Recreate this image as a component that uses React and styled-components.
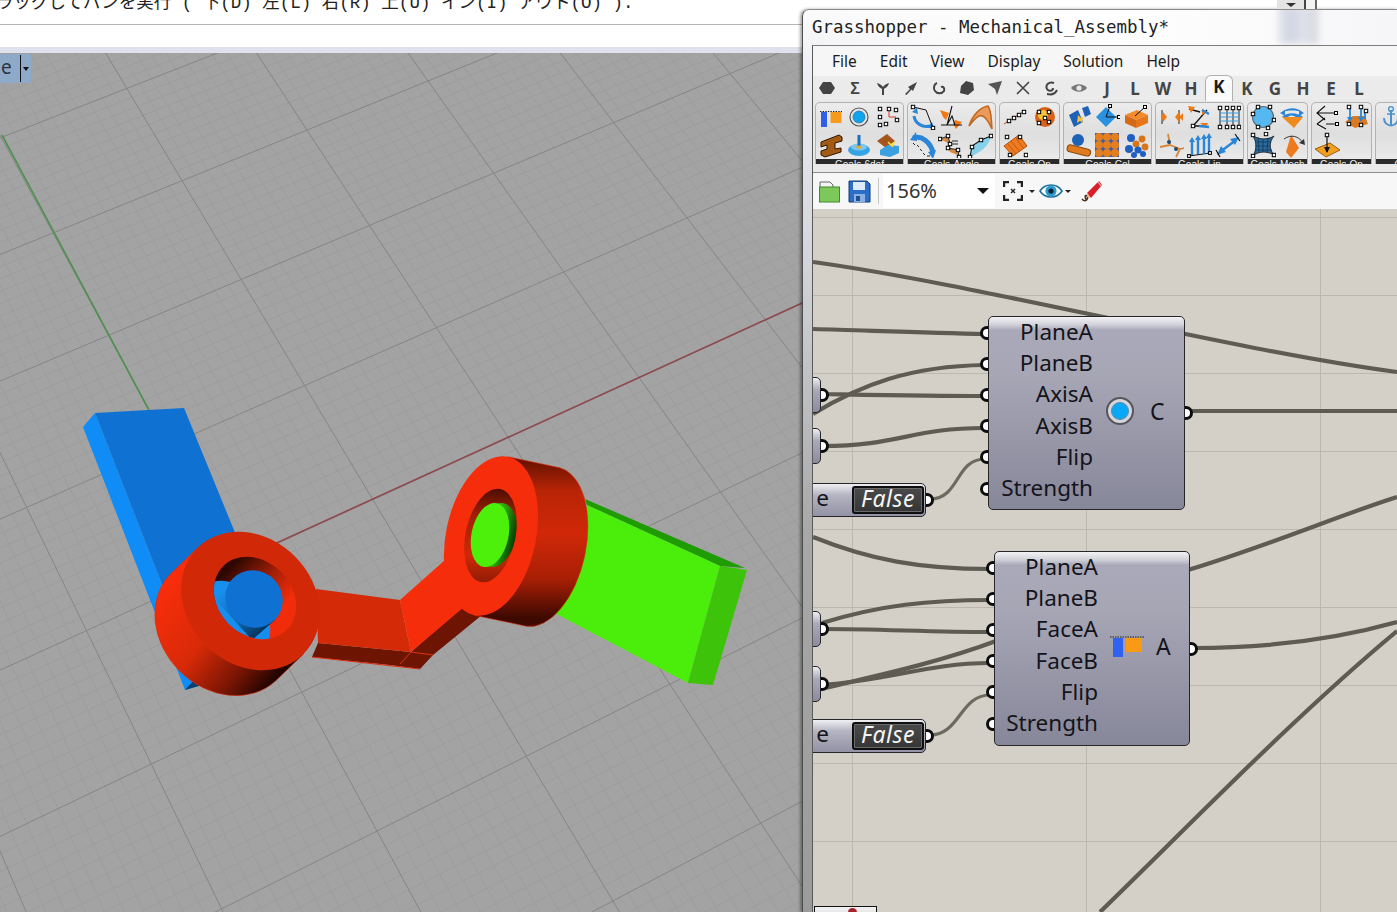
import React from 'react';
import styled, { createGlobalStyle } from 'styled-components';

const GlobalStyle = createGlobalStyle`
	html, body { margin: 0; padding: 0; background: #fff; overflow: hidden; }
	#root { width: 1397px; height: 912px; }
`;

/* ---------- perspective grid of the rhino viewport ---------- */

const quadMap = (p00, p10, p01, p11) => {
	const dx1 = p10[0] - p11[0], dx2 = p01[0] - p11[0], sx = p00[0] - p10[0] + p11[0] - p01[0];
	const dy1 = p10[1] - p11[1], dy2 = p01[1] - p11[1], sy = p00[1] - p10[1] + p11[1] - p01[1];
	const den = dx1 * dy2 - dx2 * dy1;
	const g = (sx * dy2 - dx2 * sy) / den;
	const h = (dx1 * sy - sx * dy1) / den;
	const a = p10[0] - p00[0] + g * p10[0], b = p01[0] - p00[0] + h * p01[0];
	const d = p10[1] - p00[1] + g * p10[1], e = p01[1] - p00[1] + h * p01[1];
	return (u, v) => {
		const w = g * u + h * v + 1;
		return [(a * u + b * v + p00[0]) / w, (d * u + e * v + p00[1]) / w];
	};
};

const project = quadMap([53, 233], [428, 81], [377, 831], [808, 615]);
const at = (col, row) => project(col / 3, (row - 1) / 5);

const gridLines = () => {
	const lines = [];
	for (let i = -40; i <= 90; i++) {
		const a = at(i / 10, -1.6), b = at(i / 10, 8.6);
		lines.push({ key: 'c' + i, a, b, major: i % 10 === 0 });
	}
	for (let i = -16; i <= 86; i++) {
		const a = at(-4, i / 10), b = at(9, i / 10);
		lines.push({ key: 'r' + i, a, b, major: i % 10 === 0 });
	}
	return lines;
};

const RhinoScene = () => (
	<SceneSvg viewBox="0 53 802 859">
		<defs>
			<linearGradient id="ring1Body" gradientUnits="userSpaceOnUse" x1="172" y1="573" x2="303" y2="680">
				<stop offset="0" stopColor="#f92d0b" />
				<stop offset="0.4" stopColor="#d82a08" />
				<stop offset="0.68" stopColor="#781503" />
				<stop offset="0.88" stopColor="#1c0300" />
				<stop offset="1" stopColor="#2e0600" />
			</linearGradient>
			<linearGradient id="ring1Wall" gradientUnits="userSpaceOnUse" x1="232" y1="565" x2="292" y2="620">
				<stop offset="0" stopColor="#2e0700" />
				<stop offset="0.45" stopColor="#a62006" />
				<stop offset="0.8" stopColor="#f02c0a" />
			</linearGradient>
			<linearGradient id="pin1Body" gradientUnits="userSpaceOnUse" x1="222" y1="590" x2="262" y2="640">
				<stop offset="0" stopColor="#1a90ee" />
				<stop offset="0.55" stopColor="#0f68b4" />
				<stop offset="1" stopColor="#052542" />
			</linearGradient>
			<linearGradient id="ring2Body" x1="0" y1="0" x2="0" y2="1">
				<stop offset="0" stopColor="#5e1000" />
				<stop offset="0.2" stopColor="#b82406" />
				<stop offset="0.45" stopColor="#d02808" />
				<stop offset="0.72" stopColor="#a81f05" />
				<stop offset="0.95" stopColor="#3d0900" />
			</linearGradient>
			<linearGradient id="ring2Wall" x1="0" y1="0" x2="0" y2="1">
				<stop offset="0" stopColor="#400b00" />
				<stop offset="0.3" stopColor="#a02006" />
				<stop offset="0.7" stopColor="#cf2908" />
				<stop offset="1" stopColor="#8a1a04" />
			</linearGradient>
			<linearGradient id="pin2Body" x1="0" y1="0" x2="0" y2="1">
				<stop offset="0" stopColor="#47dc0a" />
				<stop offset="0.6" stopColor="#2c9e06" />
				<stop offset="1" stopColor="#063c00" />
			</linearGradient>
			<clipPath id="hole1">
				<ellipse cx="255" cy="598" rx="45" ry="37" transform="rotate(45 255 598)" />
			</clipPath>
			<clipPath id="hole2">
				<ellipse cx="490.5" cy="535.5" rx="47.5" ry="25" transform="rotate(-78 490.5 535.5)" />
			</clipPath>
		</defs>

		<rect x="0" y="53" width="802" height="859" fill="#a3a3a3" />
		{gridLines().filter((l) => !l.major).map((l) => (
			<line key={l.key} x1={l.a[0]} y1={l.a[1]} x2={l.b[0]} y2={l.b[1]} stroke="#9d9d9d" strokeWidth="1" />
		))}
		{gridLines().filter((l) => l.major).map((l) => (
			<line key={l.key} x1={l.a[0]} y1={l.a[1]} x2={l.b[0]} y2={l.b[1]} stroke="#858585" strokeWidth="1" />
		))}
		<line x1="2" y1="135" x2="150" y2="412" stroke="#4f9150" strokeWidth="1.6" />
		<line x1="270" y1="546" x2="802" y2="303" stroke="#8f4a4e" strokeWidth="1.6" />

		{/* blue bar */}
		<polygon points="83,427 95,413 163,587 230,640 202,685 185,690" fill="#0f8cf5" />
		<polygon points="95,413 184,408 236,535 200,640 163,587" fill="#0f72d2" />
		<polygon points="185,690 196,678 215,680 202,685" fill="#0a3f70" />

		{/* green bar */}
		<polygon points="585,499 745,568 720,566 587,505" fill="#1f9c02" />
		<polygon points="587,505 720,566 688,683 545,608" fill="#4bee0a" />
		<polygon points="720,566 747,570 713,685 688,683" fill="#3dc40a" />

		{/* link arm */}
		<polygon points="318,643 411,652 462,607 482,615 433,655 420,669 390,665 312,657" fill="#6e1403" />
		<polygon points="316,589 400,600 411,652 318,643" fill="#d42a08" />
		<polygon points="400,600 445,560 464,607 411,652" fill="#f52d0b" />
		<path d="M400,664 L411,652 L433,655" fill="none" stroke="#f0400f" strokeWidth="0.8" />
		<path d="M312,657 L420,669" fill="none" stroke="#e02a08" strokeWidth="1" />

		{/* ring at the blue pin */}
		<path d="M197.5,548 L169.5,575 A75 63 45 0 0 275.5,681 L303.5,654 Z" fill="url(#ring1Body)" stroke="#dc2a08" strokeWidth="0.6" />
		<ellipse cx="250.5" cy="601" rx="75" ry="63" transform="rotate(45 250.5 601)" fill="#d12808" />
		<g clipPath="url(#hole1)">
			<rect x="205" y="550" width="100" height="100" fill="url(#ring1Wall)" />
			<ellipse cx="229" cy="622" rx="45" ry="37" transform="rotate(45 229 622)" fill="#168ef0" />
			<path d="M234,578 L214,598 L252,640 L275,620 Z" fill="url(#pin1Body)" />
			<ellipse cx="254" cy="599" rx="29.5" ry="28" transform="rotate(45 254 599)" fill="#0f72d2" />
		</g>

		{/* ring at the green pin */}
		<path d="M507.8,456.8 L559.8,467.8 A81 44 -78 0 1 526.2,626.2 L474.2,615.2 Z" fill="url(#ring2Body)" stroke="#e22a08" strokeWidth="0.6" />
		<ellipse cx="491" cy="536" rx="81" ry="45" transform="rotate(-78 491 536)" fill="#f52d0b" />
		<g clipPath="url(#hole2)">
			<rect x="455" y="485" width="70" height="100" fill="url(#ring2Wall)" />
			<ellipse cx="497" cy="535" rx="32.5" ry="19" transform="rotate(-78 497 535)" fill="url(#pin2Body)" />
			<ellipse cx="490" cy="535" rx="32.5" ry="18.5" transform="rotate(-78 490 535)" fill="#4cf00a" />
		</g>
	</SceneSvg>
);

/* ---------- grasshopper ribbon icons ---------- */

const H = ({ x, y, size = 3.4 }) => (
	<rect x={x - size / 2} y={y - size / 2} width={size} height={size} fill="#fff" stroke="#000" strokeWidth="1" />
);
const Dot = ({ x, y, r = 2.6, c = '#e07a14' }) => <circle cx={x} cy={y} r={r} fill={c} />;
const BLUE = '#2a86d8';
const ORANGE = '#ee7a16';

const alignIcon = (
	<>
		<path d="M2 7.5H24" stroke="#222" strokeWidth="1" strokeDasharray="1.4 1.2" />
		<rect x="3" y="8" width="6" height="15" fill="#2f5fe8" />
		<rect x="12.5" y="8" width="11" height="11" fill="#f59a1c" />
	</>
);

const ICONS = [
	[
		alignIcon,
		<>
			<circle cx="13" cy="13" r="9" fill="#e4e4e8" stroke="#555" strokeWidth="1.2" />
			<circle cx="13" cy="13" r="6" fill="#0ea5ee" stroke="#185a86" strokeWidth="0.6" />
		</>,
		<>
			<path d="M14 6V13H21" stroke="#d8382a" strokeWidth="1" fill="none" />
			<H x={5} y={5} /><H x={14} y={5} /><H x={21} y={6} /><H x={5} y={13} /><H x={22} y={16} /><H x={5} y={21} /><H x={11} y={20} />
		</>,
		<>
			<polygon points="3,10 21,3 24,5 24,9 17,11 17,17 23,16 23,20 7,25 3,23 3,19 9,17 9,13 3,15" fill="#a25a14" stroke="#2e1600" strokeWidth="1" />
		</>,
		<>
			<ellipse cx="13" cy="18" rx="11" ry="6" fill="#36a4e4" />
			<ellipse cx="13" cy="15" rx="8" ry="3.5" fill="#7cc8f0" />
			<path d="M13 3V15" stroke="#1b6ec0" strokeWidth="3" />
			<ellipse cx="13" cy="15" rx="3" ry="1.6" fill="#e8a83a" />
		</>,
		<>
			<polygon points="2,9 12,2 20,9 11,16" fill="#a5541c" />
			<polygon points="5,18 13,13 24,14 24,21 15,25 5,23" fill="#3aa0e0" />
			<path d="M13 10L16 13L19 11L17 15" stroke="#f8e04a" strokeWidth="1.6" fill="none" />
		</>,
	],
	[
		<>
			<path d="M4 12C5 19 12 24 20 22" stroke={BLUE} strokeWidth="3" fill="none" />
			<path d="M2 8L7 4L8 10ZM22 18L24 24L17 24Z" fill={BLUE} />
			<path d="M3 3L16 6L23 24" stroke="#111" strokeWidth="1" fill="none" />
			<H x={3} y={3} /><H x={23} y={24} />
		</>,
		<>
			<path d="M2 6L11 9L8 16L5 13ZM17 16L24 18L18 25L15 20Z" fill={ORANGE} />
			<path d="M14 2L9 21M3 21H24M14 12L9 21L17 21Z" stroke="#111" strokeWidth="1.1" fill="none" />
		</>,
		<>
			<path d="M2 22C6 10 14 3 21 2C25 8 24 16 25 25C21 16 17 10 12 12C8 14 5 18 2 22Z" fill="#ec9a5c" stroke="#c26a22" strokeWidth="1.6" />
		</>,
		<>
			<path d="M3 6C12 3 20 10 23 20" stroke={BLUE} strokeWidth="5" fill="none" />
			<path d="M0 8L6 0L7 9ZM18 20L26 18L23 27Z" fill={BLUE} />
			<path d="M3 11L5 13M7 13L9 15M10 17L12 19M13 21L15 23M17 24H20" stroke="#111" strokeWidth="0.9" />
		</>,
		<>
			<path d="M2 7L10 5L12 12L6 9ZM10 16L18 18L22 24L12 20Z" fill="#d88a40" />
			<path d="M2 7L10 4L12 12M10 16L20 18L21 25M14 9H20M14 12H20" stroke="#111" strokeWidth="0.9" fill="none" />
			<H x={2} y={7} /><H x={10} y={4} /><H x={12} y={12} /><H x={10} y={16} /><H x={20} y={18} /><H x={21} y={25} />
		</>,
		<>
			<path d="M3 25C4 14 10 9 24 4C22 14 14 20 3 25Z" fill="#86d0ea" />
			<path d="M3 25L5 14L14 8L24 4" stroke="#111" strokeWidth="1.1" fill="none" />
			<H x={3} y={25} /><H x={5} y={15} /><H x={14} y={8} /><H x={24} y={4} />
		</>,
	],
	[
		<>
			<path d="M2 20L24 6" stroke="#b84a1a" strokeWidth="1" />
			<H x={7} y={17} /><H x={12} y={14} /><H x={17} y={11} /><H x={22} y={8} />
		</>,
		<>
			<circle cx="14" cy="13" r="10" fill="#d8621a" />
			<circle cx="12" cy="11" r="5" fill="#f4c43a" />
			<H x={8} y={8} /><H x={18} y={8} /><H x={8} y={19} /><H x={18} y={18} /><H x={14} y={14} />
		</>,
		<>
			<polygon points="2,14 17,3 25,14 11,24" fill="#ef7a20" stroke="#b2520e" strokeWidth="1" />
			<path d="M9 9L18 20M14 6L22 17M6 12L14 22" stroke="#c25a10" strokeWidth="1" />
			<H x={5} y={5} /><H x={18} y={5} /><H x={8} y={23} /><H x={24} y={23} />
		</>,
		null,
		null,
		null,
	],
	[
		<>
			<polygon points="3,11 12,6 17,18 8,23" fill="#1e62b8" />
			<polygon points="16,4 22,2 25,10 19,13" fill="#1e62b8" />
			<path d="M12 11L15 14L18 13L16 16L17 19L14 17L11 19" fill="#f8c03a" />
		</>,
		<>
			<polygon points="12,3 22,13 12,23 2,13" fill="#2892e0" />
			<path d="M12 13H25M16 2L12 13" stroke="#111" strokeWidth="1" />
			<H x={25} y={13} size={3} /><H x={16} y={2} size={3} />
		</>,
		<>
			<polygon points="2,11 14,6 25,11 13,16" fill="#f28a2a" />
			<polygon points="2,11 13,16 13,24 2,19" fill="#d66a14" />
			<polygon points="25,11 13,16 13,24 25,19" fill="#e5761a" />
			<path d="M12 12L22 3" stroke="#111" strokeWidth="1" />
			<H x={22} y={3} size={3} />
		</>,
		<>
			<circle cx="12" cy="8" r="6" fill="#1e62b8" />
			<rect x="1" y="15" width="24" height="7" rx="3.5" transform="rotate(14 13 18)" fill="#df7a1e" stroke="#8a4a10" strokeWidth="1" />
		</>,
		<>
			<rect x="1" y="1" width="24" height="24" fill="#3a5ea8" />
			{[5, 13, 21].map((y) => [5, 13, 21].map((x) => <Dot key={x + '-' + y} x={x} y={y} r={4} c="#e67e1c" />))}
		</>,
		<>
			<Dot x={8} y={6} r={4} c="#1f5fc4" /><Dot x={19} y={7} r={3.4} c="#d8741a" /><Dot x={13} y={12} r={3.4} c="#d8741a" />
			<Dot x={6} y={17} r={4} c="#1f5fc4" /><Dot x={15} y={18} r={3.6} c="#1f5fc4" /><Dot x={22} y={15} r={3.4} c="#d8741a" /><Dot x={11} y={23} r={3} c="#1f5fc4" /><Dot x={20} y={22} r={3} c="#1f5fc4" />
		</>,
	],
	[
		<>
			<path d="M4 6V20M21 6V20" stroke="#222" strokeWidth="1" />
			<polygon points="4,13 0,9 0,17" fill={ORANGE} transform="translate(3 0)" />
			<polygon points="9,13 5,8 5,18" fill={ORANGE} />
			<polygon points="17,13 21,8 21,18" fill={ORANGE} />
			<polygon points="21,13 25,9 25,17" fill={ORANGE} />
		</>,
		<>
			<path d="M3 5L14 8M21 6L7 22L20 22" stroke="#111" strokeWidth="1.3" fill="none" />
			<path d="M2 2L9 3L5 9ZM16 5L22 8L16 11ZM14 19L22 19L20 24Z" fill={ORANGE} />
			<path d="M16 6L23 10M13 22L23 23" stroke={BLUE} strokeWidth="2.4" />
			<H x={7} y={22} />
		</>,
		<>
			<path d="M5 3V24M12 3V24M18 3V24M24 3V24" stroke="#222" strokeWidth="1" />
			<path d="M5 9H24M5 13H24M5 17H24" stroke="#3a9ee0" strokeWidth="1.2" />
			<H x={5} y={4} /><H x={12} y={4} /><H x={18} y={4} /><H x={24} y={4} /><H x={5} y={23} /><H x={12} y={23} /><H x={18} y={23} /><H x={24} y={23} />
		</>,
		<>
			<path d="M10 2L12 13L2 15M12 13L22 17L18 25M22 17L26 16" stroke="#d8863a" strokeWidth="1.8" fill="none" />
			<circle cx="11" cy="10" r="2" fill="#1d4d76" /><circle cx="18" cy="17" r="2" fill="#1d4d76" />
		</>,
		<>
			<path d="M3 24L24 21" stroke="#111" strokeWidth="1.2" />
			<path d="M6 23V9M12 22V7M18 22V6M23 21V5" stroke="#2a86d8" strokeWidth="2.4" />
			<path d="M3 10L6 5L9 10ZM9 8L12 3L15 8ZM15 7L18 2L21 7ZM20 6L23 1L26 6Z" fill="#2a86d8" />
			<H x={3} y={24} size={2.8} /><H x={24} y={21} size={2.8} />
		</>,
		<>
			<path d="M5 20L21 8" stroke="#2a86d8" strokeWidth="2.4" />
			<path d="M2 23L6 14L11 20ZM24 5L15 7L20 13Z" fill="#2a86d8" />
			<path d="M1 18L5 25M20 2L25 9" stroke="#111" strokeWidth="1.2" />
		</>,
	],
	[
		<>
			<circle cx="13" cy="13" r="10.5" fill="#56b8f0" stroke="#5d6c74" strokeWidth="1.2" />
			<H x={8} y={3} /><H x={20} y={3} /><H x={3} y={10} /><H x={24} y={16} /><H x={8} y={23} /><H x={18} y={24} />
		</>,
		<>
			<polygon points="3,13 24,13 15,24" fill="#ee8a1e" />
			<path d="M3 8C9 3 18 3 23 8C18 6 8 6 3 8ZM3 13C8 8 18 8 24 13L17 13C14 11 11 11 9 13Z" fill="#2a86d8" />
			<path d="M1 9L6 6L6 12ZM25 9L20 6L20 12Z" fill="#2a86d8" />
		</>,
		<>
			<path d="M2 3C8 8 18 8 24 4C19 10 19 17 24 23C18 19 8 19 3 24C7 17 7 9 2 3Z" fill="#2d6a9c" stroke="#111" strokeWidth="0.8" />
			<path d="M8 5L9 21M13 7V20M18 6L17 21M5 10H21M5 14H20M5 18H22" stroke="#103a5a" strokeWidth="0.8" />
			<H x={3} y={3} /><H x={16} y={2} /><H x={3} y={24} /><H x={24} y={23} />
		</>,
		<>
			<polygon points="12,3 7,20 12,26 20,16" fill="#ee7a1e" />
			<path d="M5 7C12 2 20 4 24 11" stroke="#333" strokeWidth="1" fill="none" />
			<path d="M25 7L26 13L20 11Z" fill="#333" />
		</>,
	],
	[
		<>
			<path d="M11 2L3 9L11 16M3 9H21M3 20L11 14M3 20L12 25M12 20H23" stroke="#111" strokeWidth="1.1" fill="none" />
			<H x={22} y={9} size={3} /><H x={23} y={20} size={3} />
		</>,
		<>
			<polygon points="2,18 10,12 22,12 25,20 12,24" fill="#dc7a22" />
			<path d="M7 3V15M18 3V15M22 6V15" stroke="#2a86d8" strokeWidth="1.8" />
			<path d="M4 13L7 18L10 13ZM15 13L18 18L21 13Z" fill="#2a86d8" />
			<H x={6} y={3} /><H x={18} y={3} /><H x={23} y={7} /><H x={6} y={20} /><H x={18} y={21} />
		</>,
		<>
			<polygon points="1,17 16,11 26,18 12,25" fill="#f0a020" stroke="#a05c0e" strokeWidth="1" />
			<path d="M13 2V20" stroke="#111" strokeWidth="1.2" />
			<path d="M10 15L13 21L16 15Z" fill="#111" />
			<H x={13} y={3} />
		</>,
		null,
	],
	[
		<>
			<path d="M13 6V21M6 14C6 24 20 24 20 14" stroke="#4a92d2" strokeWidth="2" fill="none" />
			<circle cx="13" cy="5" r="2.4" fill="none" stroke="#4a92d2" strokeWidth="1.4" />
			<path d="M9 10H17" stroke="#4a92d2" strokeWidth="1.6" />
		</>,
		<>
			<path d="M11 12V24M5 18C5 26 17 26 17 18" stroke="#18a0c8" strokeWidth="2" fill="none" />
			<path d="M11 10V2M16 10L24 3" stroke="#111" strokeWidth="1.1" />
		</>,
	],
];

const PANELS = [
	{ title: 'Goals-6dof', cols: 3, icons: ICONS[0] },
	{ title: 'Goals-Angle', cols: 3, icons: ICONS[1] },
	{ title: 'Goals-On', cols: 2, icons: [ICONS[2][0], ICONS[2][1], ICONS[2][2], null] },
	{ title: 'Goals-Col', cols: 3, icons: ICONS[3] },
	{ title: 'Goals-Lin', cols: 3, icons: ICONS[4] },
	{ title: 'Goals-Mesh', cols: 2, icons: ICONS[5] },
	{ title: 'Goals-On', cols: 2, icons: ICONS[6] },
	{ title: 'Grab', cols: 2, icons: ICONS[7] },
];

/* small glyphs of the category tabs, the rest of them are letters */
const TAB_ICONS = [
	<path d="M4 2H12L16 8L12 14H4L0 8Z" fill="#444" />,
	<text x="8" y="14" textAnchor="middle" fontFamily="Liberation Sans, sans-serif" fontWeight="700" fontSize="16" fill="#444">Σ</text>,
	<path d="M2 3C3 7 6 8 7 9V15H9V9C10 8 13 7 14 3C11 4 9 5 8 7C7 5 5 4 2 3Z" fill="#444" />,
	<path d="M2 14L7 9L5 7L14 2L10 11L8.5 9.5L3.5 15Z" fill="#444" />,
	<path d="M6 3C3 4 2 8 4 11C6 14 11 14 13 11C14 8 12 6 10 7" stroke="#444" strokeWidth="2" fill="none" />,
	<path d="M7 1L14 3L15 10L9 15L1 13L2 6Z" fill="#444" />,
	<path d="M1 4L15 1L10 15L8 9Z" fill="#555" />,
	<path d="M2 2L14 14M14 2L2 14" stroke="#444" strokeWidth="1.6" />,
	<path d="M11 3C6 1 2 5 4 9C6 12 10 11 10 8M4 14C8 15 12 14 14 10" stroke="#444" strokeWidth="2" fill="none" />,
	<>
		<path d="M0 8C4 3 12 3 16 8C12 13 4 13 0 8Z" fill="#777" />
		<circle cx="8" cy="8" r="2.6" fill="#e8e8e8" />
	</>,
];
const TAB_LETTERS = ['J', 'L', 'W', 'H', 'K', 'K', 'G', 'H', 'E', 'L'];
const MENU = ['File', 'Edit', 'View', 'Display', 'Solution', 'Help'];

const WIRES = [
	'M813,262 C980,285 1230,350 1397,372',
	'M813,329 C880,331 930,333 985,334',
	'M813,414 C860,385 910,366 985,365',
	'M822,394 C880,395 930,396 985,396',
	'M822,446 C900,446 910,428 985,428',
	'M1188,411 L1397,411',
	'M813,537 C870,560 920,569 990,569',
	'M822,623 C880,605 930,600 990,600',
	'M822,629 C880,629 930,632 990,632',
	'M822,685 C890,680 930,663 990,663',
	'M825,688 C880,675 940,662 996,641',
	'M1193,648 C1270,648 1340,638 1397,622',
	'M1188,570 C1270,545 1340,515 1397,497',
	'M1100,912 C1180,835 1290,720 1397,631',
];
const THIN_WIRES = ['M930,499 C960,499 955,459 985,459', 'M930,735 C960,735 960,695 990,695'];

const App = () => (
	<Page>
		<GlobalStyle />
		<RhinoColumn>
			<CommandHistory>
				<CommandText>ラッグしてパンを実行 ( 下(D) 左(L) 右(R) 上(U) イン(I) アウト(O) ).</CommandText>
			</CommandHistory>
			<CommandInput />
			<ViewportBand />
			<Viewport>
				<RhinoScene />
				<ViewTab>
					<ViewTabName>e</ViewTabName>
					<ViewTabArrow />
				</ViewTab>
			</Viewport>
		</RhinoColumn>

		<DesktopColumn>
			<BehindScroll>
				<BehindArrow />
			</BehindScroll>
			<Window>
				<TitleBar>
					<TitleText>Grasshopper - Mechanical_Assembly*</TitleText>
					<GlassSmear />
				</TitleBar>
				<Client>
					<MenuBar>
						{MENU.map((m) => <MenuItem key={m}>{m}</MenuItem>)}
					</MenuBar>
					<TabRow>
						{TAB_ICONS.map((icon, i) => (
							<Tab key={i}>
								<svg width="16" height="16" viewBox="0 0 16 16">{icon}</svg>
							</Tab>
						))}
						{TAB_LETTERS.map((l, i) => <Tab key={i} $active={i === 4}>{l}</Tab>)}
					</TabRow>
					<Ribbon>
						{PANELS.map((p, i) => (
							<Panel key={i} $cols={p.cols}>
								<PanelIcons $cols={p.cols}>
									{p.icons.map((icon, j) => (
										<PanelIcon key={j}>
											{icon && <svg width="26" height="26" viewBox="0 0 26 26">{icon}</svg>}
										</PanelIcon>
									))}
								</PanelIcons>
								<PanelTitle>{p.title}</PanelTitle>
							</Panel>
						))}
					</Ribbon>
					<Toolbar>
						<ToolIcon $w={26}>
							<svg width="24" height="26" viewBox="0 0 24 26">
								<path d="M2 4H12L15 7V10H2Z" fill="#f4f4f4" stroke="#666" />
								<rect x="1.5" y="9" width="20" height="15" fill="#7cc85a" stroke="#3c8a30" />
							</svg>
						</ToolIcon>
						<ToolIcon $w={32}>
							<svg width="24" height="24" viewBox="0 0 24 24">
								<path d="M2 2H20L23 5V23H2Z" fill="#2a6ec8" stroke="#123c78" />
								<rect x="6" y="3" width="12" height="8" fill="#dfeafa" />
								<rect x="7" y="15" width="11" height="8" fill="#8ab0e0" />
								<rect x="9" y="17" width="4" height="5" fill="#1d4f98" />
							</svg>
						</ToolIcon>
						<ToolSeparator />
						<ZoomCombo>
							<span>156%</span>
							<ComboArrow />
						</ZoomCombo>
						<ToolIcon $w={30}>
							<svg width="20" height="20" viewBox="0 0 20 20">
								<path d="M1 6V1H6M14 1H19V6M19 14V19H14M6 19H1V14" stroke="#222" strokeWidth="2.4" fill="none" />
								<path d="M8 8L12 12M12 8L8 12" stroke="#222" strokeWidth="1.4" />
							</svg>
						</ToolIcon>
						<SmallArrow />
						<ToolIcon $w={26}>
							<svg width="24" height="18" viewBox="0 0 24 18">
								<path d="M1 9C6 1 18 1 23 9C18 17 6 17 1 9Z" fill="#fff" stroke="#1c6f9c" strokeWidth="1.6" />
								<circle cx="12" cy="9" r="5.6" fill="#2a9ad0" />
								<circle cx="12" cy="9" r="2.6" fill="#10242e" />
							</svg>
						</ToolIcon>
						<SmallArrow />
						<ToolIcon $w={34}>
							<svg width="24" height="24" viewBox="0 0 24 24">
								<path d="M3 20C6 24 10 20 8 17C6 15 5 19 8 21" stroke="#4a2a14" strokeWidth="1.4" fill="none" />
								<polygon points="8,14 20,2 23,6 12,19" fill="#d8202a" />
								<polygon points="8,14 12,19 8,18" fill="#f0b078" />
								<path d="M19 3L22 7" stroke="#ffb0b0" strokeWidth="1.2" />
							</svg>
						</ToolIcon>
					</Toolbar>
					<Canvas>
						<WireLayer viewBox="813 209 584 703">
							{WIRES.map((d) => <path key={d} d={d} fill="none" stroke="#5e5b53" strokeWidth="4.2" />)}
							{THIN_WIRES.map((d) => <path key={d} d={d} fill="none" stroke="#6c695f" strokeWidth="3.2" />)}
						</WireLayer>

						<Stub $y={377} />
						<Stub $y={428} />
						<Toggle $y={483} />
						<ComponentNode $x={988} $y={316} $w={197} $h={194}>
							<InputColumn $w={104}>
								{['PlaneA', 'PlaneB', 'AxisA', 'AxisB', 'Flip', 'Strength'].map((n) => (
									<InputRow key={n}><Port />{n}</InputRow>
								))}
							</InputColumn>
							<NodeOutput $gap={15}>
								<svg width="30" height="30" viewBox="0 0 30 30">
									<circle cx="15" cy="15" r="13" fill="#d4d4da" stroke="#55555d" strokeWidth="2" />
									<circle cx="15" cy="15" r="8.5" fill="#08a8f6" stroke="#5a8ca8" strokeWidth="1" />
								</svg>
								<OutputName>C</OutputName>
							</NodeOutput>
							<Port $out />
						</ComponentNode>

						<Stub $y={611} />
						<Stub $y={666} />
						<Toggle $y={719} />
						<ComponentNode $x={994} $y={551} $w={196} $h={195}>
							<InputColumn $w={103}>
								{['PlaneA', 'PlaneB', 'FaceA', 'FaceB', 'Flip', 'Strength'].map((n) => (
									<InputRow key={n}><Port />{n}</InputRow>
								))}
							</InputColumn>
							<NodeOutput $gap={10}>
								<svg width="36" height="24" viewBox="0 0 36 24">
									<path d="M0 2H35" stroke="#222" strokeWidth="1" strokeDasharray="1.5 1" />
									<rect x="3" y="3" width="10" height="19" fill="#2f62f0" />
									<rect x="16" y="3" width="16" height="14" fill="#f89a14" />
								</svg>
								<OutputName>A</OutputName>
							</NodeOutput>
							<Port $out />
						</ComponentNode>

						<BottomStub>
							<BottomStubMark />
						</BottomStub>
					</Canvas>
				</Client>
			</Window>
		</DesktopColumn>
	</Page>
);

const Toggle = ({ $y }) => (
	<ToggleBody $y={$y}>
		<ToggleLabel>e</ToggleLabel>
		<ToggleChip>False</ToggleChip>
		<Port $out />
	</ToggleBody>
);

const Page = styled.div`
	display: flex;
	width: 1397px;
	height: 912px;
	overflow: hidden;
	background: #fff;
`;

const RhinoColumn = styled.div`
	display: flex;
	flex-direction: column;
	width: 802px;
	flex: none;
`;

const CommandHistory = styled.div`
	height: 24px;
	overflow: hidden;
	border-bottom: 1px solid #b4b4b4;
	box-sizing: content-box;
`;

const CommandText = styled.div`
	margin: -7px 0 0 -4px;
	font: 17.5px/20px 'Liberation Mono', 'Noto Sans CJK JP', monospace;
	color: #222;
	white-space: nowrap;
`;

const CommandInput = styled.div`
	height: 22px;
	background: #fff;
`;

const ViewportBand = styled.div`
	height: 6px;
	background: #dfe2ec;
`;

const Viewport = styled.div`
	position: relative;
	flex: 1;
	overflow: hidden;
`;

const SceneSvg = styled.svg`
	display: block;
	width: 802px;
	height: 859px;
`;

const ViewTab = styled.div`
	position: absolute;
	left: 0;
	top: 1px;
	display: flex;
	align-items: center;
	width: 31px;
	height: 29px;
	background: #8fa9c9;
`;

const ViewTabName = styled.div`
	width: 21px;
	height: 27px;
	box-sizing: border-box;
	padding-left: 1px;
	border-right: 1px solid #111;
	font: 19px/25px 'Noto Sans', sans-serif;
	color: #2a3540;
`;

const ViewTabArrow = styled.div`
	margin-left: 2px;
	border-left: 3.5px solid transparent;
	border-right: 3.5px solid transparent;
	border-top: 4px solid #111;
`;

const DesktopColumn = styled.div`
	position: relative;
	flex: 1;
	min-width: 0;
	padding-top: 9px;
`;

const BehindScroll = styled.div`
	position: absolute;
	left: 475px;
	top: 0;
	width: 27px;
	height: 9px;
	background: #e4e4e4;
	border-right: 2px solid #444;
	box-shadow: 9px 0 0 #f2f2f2, 11px 0 0 #666;
`;

const BehindArrow = styled.div`
	width: 0;
	margin: 3px auto 0;
	border-left: 5px solid transparent;
	border-right: 5px solid transparent;
	border-top: 4px solid #333;
`;

const Window = styled.div`
	display: flex;
	flex-direction: column;
	height: 903px;
	box-sizing: border-box;
	padding-left: 9px;
	border-left: 1px solid #4c4c4c;
	border-top: 1px solid #8a8a8a;
	border-top-left-radius: 7px;
	background: linear-gradient(180deg, #fbfbfc 0, #eeeff2 60px, #d4d6db 240px, #a8a8a8 520px, #9b9b9b 100%);
	box-shadow: -2px 0 3px rgba(0, 0, 0, 0.35);
`;

const TitleBar = styled.div`
	position: relative;
	display: flex;
	align-items: center;
	height: 35px;
	flex: none;
	overflow: hidden;
	background: linear-gradient(90deg, transparent, #fff 50%, #f6f6f8);
`;

const TitleText = styled.div`
	font: 17.45px/1 'DejaVu Sans Mono', monospace;
	color: #222;
	white-space: nowrap;
`;

const GlassSmear = styled.div`
	position: absolute;
	left: 466px;
	top: -4px;
	width: 42px;
	height: 38px;
	background: linear-gradient(90deg, #d5d9e4 0, #b6bed2 30%, #cdd2df 60%, #c4c7cf 92%, #f0f0f3 100%);
	filter: blur(3px);
	opacity: 0.6;
`;

const Client = styled.div`
	display: flex;
	flex-direction: column;
	flex: 1;
	min-height: 0;
	border-left: 1px solid #5a5a5a;
	border-top: 1px solid #7d7d7d;
`;

const MenuBar = styled.div`
	display: flex;
	gap: 23px;
	align-items: center;
	box-sizing: border-box;
	height: 30px;
	flex: none;
	padding: 2px 0 0 19px;
	background: #f6f6f6;
`;

const MenuItem = styled.div`
	font: 15.5px/1 'Noto Sans', sans-serif;
	color: #1c1c1c;
`;

const TabRow = styled.div`
	display: flex;
	height: 24px;
	flex: none;
	background: #ebebeb;
`;

const Tab = styled.div`
	display: flex;
	align-items: center;
	justify-content: center;
	width: 28px;
	height: ${(p) => (p.$active ? '26px' : '24px')};
	margin-top: ${(p) => (p.$active ? '-1px' : '0')};
	box-sizing: border-box;
	font: 700 17px/1 'Noto Sans', sans-serif;
	color: ${(p) => (p.$active ? '#1c1c1c' : '#444')};
	background: ${(p) => (p.$active ? '#fafafa' : 'transparent')};
	border: ${(p) => (p.$active ? '1px solid #b0b0b0' : 'none')};
	border-bottom: none;
	border-radius: 6px 6px 0 0;
	padding-bottom: ${(p) => (p.$active ? '5px' : '0')};
	z-index: ${(p) => (p.$active ? 1 : 0)};
`;

const Ribbon = styled.div`
	display: flex;
	gap: 3px;
	height: 73px;
	flex: none;
	box-sizing: border-box;
	padding: 2px 0 0 2px;
	background: #e9e9e9;
	border-bottom: 1px solid #8c8c8c;
	overflow: hidden;
`;

const Panel = styled.div`
	display: flex;
	flex-direction: column;
	flex: none;
	box-sizing: border-box;
	width: ${(p) => (p.$cols === 3 ? '89px' : '61px')};
	height: 62px;
	border: 1px solid #b2b2b2;
	border-bottom: none;
	border-radius: 5px 5px 0 0;
	background: linear-gradient(180deg, #ececec, #dedede 50%, #ececec);
	overflow: hidden;
`;

const PanelIcons = styled.div`
	display: grid;
	grid-template-columns: repeat(${(p) => p.$cols}, 1fr);
	grid-auto-rows: 28px;
	padding: 0 1px;
`;

const PanelIcon = styled.div`
	display: flex;
	align-items: center;
	justify-content: center;
	min-width: 0;
`;

const PanelTitle = styled.div`
	margin-top: auto;
	height: 5px;
	overflow: hidden;
	background: #2b2b2b;
	color: #f0f0f0;
	text-align: center;
	font: 10px/12px 'Liberation Sans', sans-serif;
	white-space: nowrap;
`;

const Toolbar = styled.div`
	display: flex;
	align-items: center;
	height: 36px;
	flex: none;
	padding-left: 4px;
	background: #f7f7f7;
`;

const ToolIcon = styled.div`
	display: flex;
	align-items: center;
	justify-content: center;
	width: ${(p) => p.$w}px;
	flex: none;
`;

const ToolSeparator = styled.div`
	width: 1px;
	height: 26px;
	margin: 0 4px 0 3px;
	background: #c4c4c4;
`;

const ZoomCombo = styled.div`
	display: flex;
	align-items: center;
	justify-content: space-between;
	box-sizing: border-box;
	width: 112px;
	height: 34px;
	margin-right: 3px;
	padding: 0 6px 0 3px;
	background: #fff;
	font: 20px/1 'Noto Sans', sans-serif;
	color: #333;
`;

const ComboArrow = styled.div`
	border-left: 6px solid transparent;
	border-right: 6px solid transparent;
	border-top: 6px solid #111;
`;

const SmallArrow = styled.div`
	flex: none;
	margin: 0 3px 0 1px;
	border-left: 3px solid transparent;
	border-right: 3px solid transparent;
	border-top: 3px solid #222;
`;

const Canvas = styled.div`
	position: relative;
	flex: 1;
	overflow: hidden;
	background-color: #d4d0c8;
	background-image: linear-gradient(90deg, #bcb8b0 1.5px, transparent 1.5px), linear-gradient(180deg, #bcb8b0 1.5px, transparent 1.5px);
	background-size: 234px 100%, 100% 78px;
	background-position: 39px 0, 0 8px;
`;

const WireLayer = styled.svg`
	position: absolute;
	left: 0;
	top: 0;
	width: 584px;
	height: 703px;
`;

const ComponentNode = styled.div`
	position: absolute;
	left: ${(p) => p.$x - 813}px;
	top: ${(p) => p.$y - 209}px;
	display: flex;
	box-sizing: border-box;
	width: ${(p) => p.$w}px;
	height: ${(p) => p.$h}px;
	border: 1.5px solid #26262a;
	border-radius: 5px;
	background: linear-gradient(180deg, #f3f3f5 0, #cfcfd8 8px, #a9a9b9 13px, #a6a6b5 30%, #87879a 100%);
`;

const InputColumn = styled.div`
	width: ${(p) => p.$w}px;
	flex: none;
`;

const InputRow = styled.div`
	position: relative;
	height: 31.2px;
	font: 22.5px/30px 'Noto Sans', sans-serif;
	color: #14141a;
	text-align: right;
`;

const Port = styled.div`
	position: absolute;
	${(p) => (p.$out ? 'right: -9px; border-radius: 0 8px 8px 0;' : 'left: -9px; border-radius: 8px 0 0 8px;')}
	top: 50%;
	box-sizing: border-box;
	width: 8px;
	height: 14px;
	margin-top: -7px;
	border: 3px solid #0c0c0c;
	${(p) => (p.$out ? 'border-left: none;' : 'border-right: none;')}
	background: #fff;
`;

const NodeOutput = styled.div`
	display: flex;
	align-items: center;
	gap: ${(p) => p.$gap}px;
	padding: 0 0 4px 12px;
	flex: 1;
	min-width: 0;
`;

const OutputName = styled.div`
	font: 23px/1 'Noto Sans', sans-serif;
	color: #14141a;
`;

const Stub = styled.div`
	position: absolute;
	left: -20px;
	top: ${(p) => p.$y - 209}px;
	width: 28px;
	height: 36px;
	box-sizing: border-box;
	border: 1.5px solid #26262a;
	border-radius: 5px;
	background: linear-gradient(180deg, #efeff2, #a9a9b9 35%, #8c8c9e);
	&::after {
		content: '';
		position: absolute;
		right: -9px;
		top: 50%;
		width: 8px;
		height: 14px;
		margin-top: -7px;
		box-sizing: border-box;
		border: 3px solid #0c0c0c;
		border-left: none;
		border-radius: 0 8px 8px 0;
		background: #fff;
	}
`;

const ToggleBody = styled.div`
	position: absolute;
	left: -60px;
	top: ${(p) => p.$y - 209}px;
	display: flex;
	align-items: center;
	justify-content: flex-end;
	box-sizing: border-box;
	width: 173px;
	height: 34px;
	padding-right: 1px;
	border: 1.5px solid #26262a;
	border-radius: 5px;
	background: linear-gradient(180deg, #efeff2, #b4b4c2 35%, #9292a4);
`;

const ToggleLabel = styled.div`
	margin: 0 23px 3px 0;
	font: 22.5px/1 'Noto Sans', sans-serif;
	color: #14141a;
	white-space: nowrap;
`;

const ToggleChip = styled.div`
	width: 72px;
	height: 28px;
	box-sizing: border-box;
	border: 2px solid #0f0f0f;
	border-radius: 3px;
	background: linear-gradient(180deg, #4a4a4a, #353535);
	box-shadow: inset 0 0 0 1px #6a6a6a;
	font: italic 23px/21px 'Noto Sans', sans-serif;
	letter-spacing: 0.5px;
	color: #f4f4f4;
	text-align: center;
`;

const BottomStub = styled.div`
	position: absolute;
	left: 1px;
	top: 697px;
	width: 63px;
	height: 20px;
	box-sizing: border-box;
	border: 1.5px solid #111;
	background: linear-gradient(180deg, #f4f4f4, #c8c8c8);
`;

const BottomStubMark = styled.div`
	width: 9px;
	height: 9px;
	margin: 1px 0 0 33px;
	border-radius: 50%;
	background: #a8202c;
`;

export default App;
